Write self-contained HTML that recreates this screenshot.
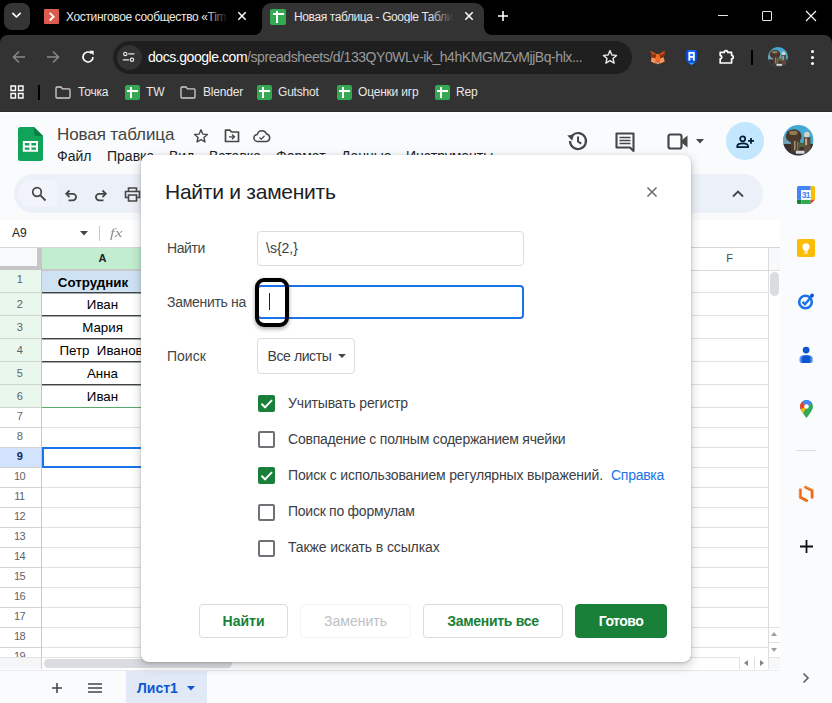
<!DOCTYPE html>
<html lang="ru">
<head>
<meta charset="utf-8">
<title>Новая таблица - Google Таблицы</title>
<style>
*{box-sizing:border-box;margin:0;padding:0}
html,body{width:832px;height:703px;overflow:hidden;background:#fff}
body{position:relative;font-family:"Liberation Sans",sans-serif;color:#202124}
.a{position:absolute}
.t{position:absolute;white-space:nowrap;line-height:1}
svg{position:absolute;overflow:visible}
/* browser chrome */
#tabstrip{left:0;top:0;width:832px;height:36px;background:#000}
#toolbar{left:0;top:35px;width:832px;height:76px;background:#333;border-radius:8px 8px 0 0}
#tabstrip{height:46px}
#sep{left:0;top:111px;width:832px;height:1px;background:#2c2c2c}
.ct{color:#e8e8e8;font-size:12px;letter-spacing:-0.2px}
/* sheets */
#app{left:0;top:112px;width:832px;height:591px;background:#f9fbfd}
.menu{font-size:14px;color:#202124;top:149px}
.rh{position:absolute;left:0;width:39px;text-align:center;font-size:11px;color:#5f6368;line-height:1;letter-spacing:-0.5px}
.cell{position:absolute;left:42px;width:121px;text-align:center;font-size:13.33px;color:#000;line-height:1;white-space:nowrap}
.lbl{font-size:14px;color:#444746}
.cb{position:absolute;left:258.400px;width:17px;height:17px;border-radius:2px}
.cb.off{border:2px solid #6e7276;background:#fff}
.cb.on{background:#188038}
.cbl{font-size:14px;color:#3c4043;left:288px}
.btn{position:absolute;top:604px;height:34px;border-radius:4px;border:1px solid #dadce0;background:#fff;color:#188038;font-size:14px;font-weight:bold;text-align:center;line-height:32px;white-space:nowrap}
</style>
</head>
<body>

<!-- ===== Browser chrome ===== -->
<div class="a" id="tabstrip"></div>
<div class="a" id="toolbar"></div>
<div class="a" id="sep"></div>

<!-- tab search button -->
<div class="a" style="left:4px;top:3px;width:26px;height:26.500px;border-radius:8px;background:#353535"></div>
<svg style="left:11.200px;top:12.300px" width="11" height="7.300" viewBox="0 0 12 8"><path d="M2 1.500 L6 5.500 L10 1.500" fill="none" stroke="#fff" stroke-width="1.800" stroke-linecap="round" stroke-linejoin="round"/></svg>

<!-- tab 1 -->
<div class="a" style="left:44px;top:8.500px;width:15px;height:15.300px;background:#dc5b50;border-radius:1px"></div>
<svg style="left:43.500px;top:8.500px" width="15.300" height="15.300" viewBox="0 0 16 16"><path d="M6 4 L10 8 L6 12" fill="none" stroke="#fff" stroke-width="2"/></svg>
<div class="t ct" style="left:66px;top:11px;width:180px;overflow:hidden;letter-spacing:-0.36px" id="tab1">Хостинговое сообщество «Tim</div>
<div class="a" style="left:206px;top:6px;width:30px;height:22px;background:linear-gradient(90deg,rgba(0,0,0,0),#000 75%)"></div>
<svg style="left:237px;top:11.200px" width="10" height="10" viewBox="0 0 10 10"><path d="M1.300 1.300 L8.700 8.700 M8.700 1.300 L1.300 8.700" stroke="#fff" stroke-width="1.500"/></svg>

<!-- active tab -->
<div class="a" style="left:262px;top:3px;width:222px;height:34px;background:#333;border-radius:9px 9px 0 0"></div>
<svg style="left:254px;top:27px" width="8" height="8" viewBox="0 0 8 8"><path d="M8 0 V8 H0 A8 8 0 0 0 8 0 Z" fill="#333"/></svg>
<svg style="left:484px;top:27px" width="8" height="8" viewBox="0 0 8 8"><path d="M0 0 V8 H8 A8 8 0 0 1 0 0 Z" fill="#333"/></svg>
<div class="a" style="left:270px;top:9px;width:16px;height:16px;background:#34a853;border-radius:2px"></div>
<div class="a" style="left:275.500px;top:11px;width:2px;height:12px;background:#fff"></div>
<div class="a" style="left:272.500px;top:12.700px;width:11px;height:2px;background:#fff"></div>
<div class="t ct" style="left:294px;top:11px;width:166px;overflow:hidden;letter-spacing:-0.39px" id="tab2">Новая таблица - Google Табли</div>
<div class="a" style="left:430px;top:6px;width:28px;height:22px;background:linear-gradient(90deg,rgba(51,51,51,0),#333 85%)"></div>
<svg style="left:463.700px;top:11.200px" width="10" height="10" viewBox="0 0 10 10"><path d="M1.300 1.300 L8.700 8.700 M8.700 1.300 L1.300 8.700" stroke="#fff" stroke-width="1.500"/></svg>
<!-- new tab plus -->
<svg style="left:498.200px;top:11.300px" width="10" height="10" viewBox="0 0 10 10"><path d="M5 0 V10 M0 5 H10" stroke="#fff" stroke-width="1.600"/></svg>
<!-- window controls -->
<div class="a" style="left:718px;top:15px;width:10px;height:1px;background:#e4e4e4"></div>
<div class="a" style="left:762px;top:11px;width:10px;height:10px;border:1px solid #e4e4e4;border-radius:1px"></div>
<svg style="left:806px;top:11px" width="10" height="10" viewBox="0 0 10 10"><path d="M0 0 L10 10 M10 0 L0 10" stroke="#fff" stroke-width="1.1"/></svg>

<!-- nav buttons -->
<svg style="left:12px;top:50px" width="14" height="14" viewBox="0 0 14 14"><path d="M13 7 H2 M7 1.5 L1.5 7 L7 12.5" fill="none" stroke="#8a8a8a" stroke-width="1.5"/></svg>
<svg style="left:46px;top:50px" width="14" height="14" viewBox="0 0 14 14"><path d="M1 7 H12 M7 1.5 L12.5 7 L7 12.5" fill="none" stroke="#8a8a8a" stroke-width="1.5"/></svg>
<svg style="left:81px;top:50px" width="14" height="14" viewBox="0 0 14 14"><path d="M12 7 A5 5 0 1 1 10.5 3.4" fill="none" stroke="#fff" stroke-width="1.6"/><path d="M8.2 0.8 H12.6 V5.2 Z" fill="#fff"/></svg>

<!-- url pill -->
<div class="a" style="left:113px;top:41px;width:519px;height:33px;border-radius:17px;background:#1f1f1f"></div>
<div class="a" style="left:117px;top:45px;width:25px;height:25px;border-radius:13px;background:#333"></div>
<svg style="left:122.300px;top:51px" width="13.300" height="11.700" viewBox="0 0 16 14"><path d="M7.5 3.5 H15 M1 10.5 H8.500" stroke="#e8e8e8" stroke-width="1.500" fill="none"/><circle cx="4" cy="3.500" r="2" fill="none" stroke="#e8e8e8" stroke-width="1.400"/><circle cx="12" cy="10.500" r="2" fill="none" stroke="#e8e8e8" stroke-width="1.400"/></svg>
<div class="t" style="left:148px;top:50px;font-size:14px;color:#fff" id="url"><span style="letter-spacing:-0.45px">docs.google.com</span><span style="color:#9a9a9a;letter-spacing:-0.44px" id="url2">/spreadsheets/d/133QY0WLv-ik_h4hKMGMZvMjjBq-hlx...</span></div>
<svg style="left:602px;top:49px" width="16" height="16" viewBox="0 0 16 16"><path d="M8 1.6 L9.9 6 L14.6 6.4 L11 9.5 L12.1 14.2 L8 11.7 L3.9 14.2 L5 9.5 L1.4 6.4 L6.1 6 Z" fill="none" stroke="#e8e8e8" stroke-width="1.4" stroke-linejoin="round"/></svg>

<!-- extensions -->
<svg style="left:650px;top:49.500px" width="15.500" height="15" viewBox="0 0 16 15"><path d="M0.500 0.500 L6.500 4.200 H9.500 L15.500 0.500 L14.200 7.500 L15 11.500 L10.500 13.800 H5.500 L1 11.500 L1.800 7.500 Z" fill="#f0601f"/><path d="M0.500 0.500 L6.500 4.200 L5.600 8.500 L1.800 7.500 Z M15.500 0.500 L9.500 4.200 L10.400 8.500 L14.200 7.500 Z" fill="#8a2f10"/><path d="M0.500 0.500 L6.500 4.200 L3 4.500 Z M15.500 0.500 L9.500 4.200 L13 4.500 Z" fill="#e2561b"/><path d="M1.800 7.500 L5.600 8.500 L5.500 13.800 L1 11.500 Z M14.200 7.500 L10.400 8.500 L10.500 13.800 L15 11.500 Z" fill="#f7955a"/><path d="M5.600 8.500 L6.500 4.200 H9.500 L10.400 8.500 L8 11 Z" fill="#f26a25"/><path d="M5.800 11.800 H10.200 L8 14.800 Z" fill="#d9cfc6"/><path d="M6.800 12 H9.200 L8 13.200 Z" fill="#3a2a22"/></svg>
<svg style="left:686.300px;top:49.500px" width="11.200" height="15" viewBox="0 0 12 16"><path d="M0 1.500 Q0 0 1.500 0 H10.500 Q12 0 12 1.500 V10 Q12 13 6 16 Q0 13 0 10 Z" fill="#0d47d0"/><path d="M2 0 H10 V11 H2 Z" fill="#1f6bf2"/><path d="M2 12.800 L6 16 L10 12.800 Q6 14.600 2 12.800 Z" fill="#39a8f5"/><path d="M3.600 11.500 V3 H8.400 V11.500 M3.600 7.300 H8.400" stroke="#fff" stroke-width="1.900" fill="none"/></svg>
<svg style="left:718px;top:49px" width="16" height="16" viewBox="0 0 16 16"><path d="M2.200 3.400 H6.300 A1.700 1.700 0 0 1 9.700 3.400 H13.600 V6.400 A1.700 1.700 0 0 1 13.600 9.800 V14 H2.200 V9.800 A1.600 1.600 0 0 0 2.200 6.600 Z" fill="none" stroke="#fff" stroke-width="1.700" stroke-linejoin="round"/></svg>
<div class="a" style="left:751px;top:50px;width:2px;height:15px;background:#000"></div>
<svg style="left:767.5px;top:47px" width="20" height="20" viewBox="0 0 100 100"><clipPath id="cpa"><circle cx="50" cy="50" r="50"/></clipPath><filter id="bla" x="-20%" y="-20%" width="140%" height="140%"><feGaussianBlur stdDeviation="2.500"/></filter><g clip-path="url(#cpa)"><rect width="100" height="100" fill="#45a9d4"/><g filter="url(#bla)"><rect x="-5" y="40" width="40" height="30" fill="#6f9fb8"/><rect x="-5" y="62" width="110" height="45" fill="#3b2f2a"/><ellipse cx="35" cy="36" rx="26" ry="22" fill="#4a392b"/><ellipse cx="34" cy="26" rx="14" ry="7" fill="#8f7a56"/><rect x="26" y="48" width="30" height="42" fill="#4b3c2f"/><rect x="36" y="52" width="5" height="30" fill="#a59475"/><rect x="46" y="55" width="4" height="28" fill="#8d7c60"/><ellipse cx="78" cy="32" rx="9" ry="10" fill="#d9d2c6"/><rect x="68" y="40" width="22" height="52" fill="#5b4a3a"/><rect x="72" y="44" width="7" height="22" fill="#b9a88a"/><rect x="52" y="58" width="18" height="14" fill="#56613f"/><rect x="42" y="84" width="28" height="10" fill="#d6dbe2"/></g></g></svg>
<div class="a" style="left:811px;top:50px;width:3px;height:3px;border-radius:2px;background:#fff;box-shadow:0 6px 0 #fff,0 12px 0 #fff"></div>

<!-- bookmarks bar -->
<svg style="left:10px;top:85px" width="14" height="14" viewBox="0 0 14 14"><path d="M1 1 H5.500 V5.500 H1 Z M8.500 1 H13 V5.500 H8.500 Z M1 8.500 H5.500 V13 H1 Z M8.500 8.500 H13 V13 H8.500 Z" fill="none" stroke="#fff" stroke-width="1.4"/></svg>
<div class="a" style="left:38px;top:85px;width:2px;height:15px;background:#000"></div>
<svg style="left:55px;top:86px" width="16" height="13" viewBox="0 0 16 13"><path d="M1 2 Q1 1 2 1 H6 L7.500 2.800 H14 Q15 2.800 15 3.800 V11 Q15 12 14 12 H2 Q1 12 1 11 Z" fill="none" stroke="#d0d0d0" stroke-width="1.3"/></svg>
<div class="t ct" style="left:78px;top:86px">Точка</div>
<div class="a" style="left:125px;top:85px;width:15px;height:15px;background:#34a853;border-radius:2px"></div>
<div class="a" style="left:129.7px;top:87px;width:2px;height:11px;background:#fff"></div><div class="a" style="left:127px;top:89.500px;width:11px;height:2px;background:#fff"></div>
<div class="t ct" style="left:146px;top:86px">TW</div>
<svg style="left:180px;top:86px" width="16" height="13" viewBox="0 0 16 13"><path d="M1 2 Q1 1 2 1 H6 L7.500 2.800 H14 Q15 2.800 15 3.800 V11 Q15 12 14 12 H2 Q1 12 1 11 Z" fill="none" stroke="#d0d0d0" stroke-width="1.3"/></svg>
<div class="t ct" style="left:203px;top:86px">Blender</div>
<div class="a" style="left:257px;top:85px;width:15px;height:15px;background:#34a853;border-radius:2px"></div>
<div class="a" style="left:261.7px;top:87px;width:2px;height:11px;background:#fff"></div><div class="a" style="left:259px;top:89.500px;width:11px;height:2px;background:#fff"></div>
<div class="t ct" style="left:278px;top:86px">Gutshot</div>
<div class="a" style="left:337px;top:85px;width:15px;height:15px;background:#34a853;border-radius:2px"></div>
<div class="a" style="left:341.7px;top:87px;width:2px;height:11px;background:#fff"></div><div class="a" style="left:339px;top:89.500px;width:11px;height:2px;background:#fff"></div>
<div class="t ct" style="left:358px;top:86px">Оценки игр</div>
<div class="a" style="left:435px;top:85px;width:15px;height:15px;background:#34a853;border-radius:2px"></div>
<div class="a" style="left:439.7px;top:87px;width:2px;height:11px;background:#fff"></div><div class="a" style="left:437px;top:89.500px;width:11px;height:2px;background:#fff"></div>
<div class="t ct" style="left:456px;top:86px">Rep</div>

<!-- ===== Sheets app ===== -->
<div class="a" id="app"></div>
<div class="a" style="left:0;top:112px;width:832px;height:1px;background:#fff"></div>
<!--APP-->
<!-- header -->
<svg style="left:18px;top:127px" width="25" height="34" viewBox="0 0 25 34"><path d="M2.500 0 H16 L25 9 V31.500 Q25 34 22.500 34 H2.500 Q0 34 0 31.500 V2.500 Q0 0 2.500 0 Z" fill="#10a35a"/><path d="M16 0 L25 9 H18.500 Q16 9 16 6.500 Z" fill="#0a8048"/><path d="M4.800 14 H20 V24.800 H4.800 Z M6.800 16 V18.400 H11.400 V16 Z M13.400 16 V18.400 H18 V16 Z M6.800 20.400 V22.800 H11.400 V20.400 Z M13.400 20.400 V22.800 H18 V20.400 Z" fill="#fff" fill-rule="evenodd"/></svg>
<div class="t" id="title" style="left:57px;top:126px;font-size:17px;letter-spacing:-0.1px;color:#444">Новая таблица</div>
<svg style="left:193px;top:128px" width="16" height="16" viewBox="0 0 16 16"><path d="M8 1.800 L9.800 6.100 L14.400 6.500 L10.900 9.500 L12 14 L8 11.600 L4 14 L5.100 9.500 L1.600 6.500 L6.200 6.100 Z" fill="none" stroke="#444746" stroke-width="1.400" stroke-linejoin="round"/></svg>
<svg style="left:224px;top:129px" width="16" height="14" viewBox="0 0 16 14"><path d="M1.500 1.200 H6 L7.500 3 H14.500 V12.500 H1.500 Z" fill="none" stroke="#444746" stroke-width="1.700" stroke-linejoin="round"/><path d="M5 7.800 H10 M8 5.500 L10.500 7.800 L8 10.200" fill="none" stroke="#444746" stroke-width="1.300"/></svg>
<svg style="left:253px;top:129px" width="18" height="14" viewBox="0 0 18 14"><path d="M4.500 12.500 A3.500 3.500 0 0 1 4.300 5.500 A4.800 4.800 0 0 1 13.500 5 A3.800 3.800 0 0 1 13.500 12.500 Z" fill="none" stroke="#444746" stroke-width="1.500"/><path d="M6.500 8.500 L8.300 10.200 L11.500 6.800" fill="none" stroke="#444746" stroke-width="1.300"/></svg>
<div class="t menu" style="left:57px" id="m1">Файл</div>
<div class="t menu" style="left:107px" id="m2">Правка</div>
<div class="t menu" style="left:169px" id="m3">Вид</div>
<div class="t menu" style="left:209px" id="m4">Вставка</div>
<div class="t menu" style="left:276px" id="m5">Формат</div>
<div class="t menu" style="left:341px" id="m6">Данные</div>
<div class="t menu" style="left:406px" id="m7">Инструменты</div>

<!-- header right icons -->
<svg style="left:567px;top:131px" width="21" height="20" viewBox="0 0 21 20"><path d="M3 10 A8 8 0 1 0 5.300 4.400" fill="none" stroke="#444746" stroke-width="2.200"/><path d="M0.300 4.600 L7 3.600 L5.200 9.800 Z" fill="#444746"/><path d="M11 5.500 V10.500 L14.300 12.600" fill="none" stroke="#444746" stroke-width="2"/></svg>
<svg style="left:615px;top:132px" width="20" height="20" viewBox="0 0 20 20"><path d="M1.500 1.500 H18.500 V19 L15 15.500 H1.500 Z" fill="none" stroke="#444746" stroke-width="2.100" stroke-linejoin="round"/><path d="M4.500 5.500 H15.500 M4.500 8.500 H15.500 M4.500 11.500 H15.500" stroke="#444746" stroke-width="1.700"/></svg>
<svg style="left:667px;top:133px" width="22" height="17" viewBox="0 0 22 17"><path d="M1.500 3.500 Q1.500 1.500 3.500 1.500 H12.500 Q14.500 1.500 14.500 3.500 V13.500 Q14.500 15.500 12.500 15.500 H3.500 Q1.500 15.500 1.500 13.500 Z" fill="none" stroke="#444746" stroke-width="2.200"/><path d="M15 7 L20.500 2.500 V14.500 L15 10 Z" fill="#444746"/></svg>
<svg style="left:696px;top:139px" width="8" height="5" viewBox="0 0 8 5"><path d="M0 0 H8 L4 4.500 Z" fill="#444746"/></svg>
<div class="a" style="left:725.500px;top:122px;width:38px;height:38px;border-radius:20px;background:#c2e7ff"></div>
<svg style="left:736px;top:134.800px" width="18.400" height="13.400" viewBox="0 0 22 16"><circle cx="8" cy="4.500" r="3" fill="none" stroke="#001d35" stroke-width="2.100"/><path d="M1.500 14.500 V13.500 Q1.500 10 8 10 Q14.500 10 14.500 13.500 V14.500 Z" fill="none" stroke="#001d35" stroke-width="2.100" stroke-linejoin="round"/><path d="M18 3.500 V10.500 M14.500 7 H21.500" stroke="#001d35" stroke-width="2.100"/></svg>
<svg style="left:783.4px;top:125.4px" width="30.6" height="30.6" viewBox="0 0 100 100"><clipPath id="cpb"><circle cx="50" cy="50" r="50"/></clipPath><filter id="blb" x="-20%" y="-20%" width="140%" height="140%"><feGaussianBlur stdDeviation="2.500"/></filter><g clip-path="url(#cpb)"><rect width="100" height="100" fill="#45a9d4"/><g filter="url(#blb)"><rect x="-5" y="40" width="40" height="30" fill="#6f9fb8"/><rect x="-5" y="62" width="110" height="45" fill="#3b2f2a"/><ellipse cx="35" cy="36" rx="26" ry="22" fill="#4a392b"/><ellipse cx="34" cy="26" rx="14" ry="7" fill="#8f7a56"/><rect x="26" y="48" width="30" height="42" fill="#4b3c2f"/><rect x="36" y="52" width="5" height="30" fill="#a59475"/><rect x="46" y="55" width="4" height="28" fill="#8d7c60"/><ellipse cx="78" cy="32" rx="9" ry="10" fill="#d9d2c6"/><rect x="68" y="40" width="22" height="52" fill="#5b4a3a"/><rect x="72" y="44" width="7" height="22" fill="#b9a88a"/><rect x="52" y="58" width="18" height="14" fill="#56613f"/><rect x="42" y="84" width="28" height="10" fill="#d6dbe2"/></g></g></svg>

<!-- toolbar pill -->
<div class="a" style="left:14px;top:174px;width:749px;height:39px;border-radius:20px;background:#ecf0f8"></div>
<div class="a" style="left:18px;top:180px;width:39px;height:27px;border-radius:14px 4px 4px 14px;background:#f1f4fa"></div>
<svg style="left:31px;top:186px" width="16" height="16" viewBox="0 0 16 16"><circle cx="6" cy="6" r="4.300" fill="none" stroke="#444746" stroke-width="1.700"/><path d="M9.200 9.200 L14.500 14.500" stroke="#444746" stroke-width="1.900"/></svg>
<svg style="left:64px;top:189px" width="14" height="13" viewBox="0 0 14 13"><path d="M2.500 4.800 H8.800 A3.300 3.300 0 0 1 8.800 11.400 H4.500" fill="none" stroke="#444746" stroke-width="1.800"/><path d="M5.500 1.500 L2.200 4.800 L5.500 8.100" fill="none" stroke="#444746" stroke-width="1.800"/></svg>
<svg style="left:94px;top:189px" width="14" height="13" viewBox="0 0 14 13"><path d="M11.500 4.800 H5.200 A3.300 3.300 0 0 0 5.200 11.400 H9.500" fill="none" stroke="#444746" stroke-width="1.800"/><path d="M8.500 1.500 L11.800 4.800 L8.500 8.100" fill="none" stroke="#444746" stroke-width="1.800"/></svg>
<svg style="left:124px;top:187px" width="17" height="15" viewBox="0 0 17 15"><path d="M4.500 4.500 V1 H12.500 V4.500 M4.500 10.500 H1.500 V4.500 H15.500 V10.500 H12.500 M4.500 8 H12.500 V14 H4.500 Z" fill="none" stroke="#444746" stroke-width="1.600"/></svg>
<svg style="left:732px;top:190px" width="12" height="8" viewBox="0 0 12 8"><path d="M1 6.500 L6 1.500 L11 6.500" fill="none" stroke="#444746" stroke-width="1.800"/></svg>

<!-- formula bar -->
<div class="a" style="left:0;top:220px;width:780px;height:27px;background:#fff"></div>
<div class="t" style="left:12px;top:226.500px;font-size:12px;color:#202124" id="namebox">A9</div>
<svg style="left:80px;top:231px" width="8" height="5" viewBox="0 0 8 5"><path d="M0 0 H8 L4 4.500 Z" fill="#444746"/></svg>
<div class="a" style="left:99px;top:226px;width:1px;height:15px;background:#c7c7c7"></div>
<div class="t" style="left:110px;top:226px;font-size:13.500px;font-style:italic;font-family:'Liberation Serif',serif;color:#8a9095;letter-spacing:0.3px;transform:scaleX(1.25);transform-origin:0 0" id="fx">fx</div>
<!-- grid -->
<div class="a" style="left:0;top:247px;width:780px;height:410px;background:#fff"></div>
<div class="a" style="left:0;top:247px;width:780px;height:1px;background:#d5d5d5"></div>
<div class="a" style="left:0;top:248px;width:37px;height:18px;background:#f8f9fa"></div>
<div class="a" style="left:37px;top:248px;width:5px;height:22px;background:#c6c6c6"></div>
<div class="a" style="left:0;top:266px;width:42px;height:4px;background:#c6c6c6"></div>
<div class="a" style="left:42px;top:248px;width:121px;height:22px;background:#c2edcf"></div>
<div class="t" style="left:42px;top:253px;width:121px;text-align:center;font-size:11px;color:#202124;font-weight:bold" id="colA">A</div>
<div class="t" style="left:691px;top:253px;width:77px;text-align:center;font-size:11px;color:#444746" id="colF">F</div>
<div class="a" style="left:42px;top:269px;width:121px;height:2px;background:#c8c8c8"></div>
<div class="a" style="left:163px;top:270px;width:606px;height:1px;background:#d9d9d9"></div>
<div class="a" style="left:769px;top:248px;width:11px;height:22px;background:#f8f9fa"></div>
<div class="a" style="left:769px;top:270px;width:11px;height:1px;background:#dcdcdc"></div>
<div class="a" style="left:0;top:270px;width:41px;height:138px;background:#e9f7ed"></div>
<div class="a" style="left:0;top:448px;width:41px;height:19px;background:#d3e3fd"></div>
<div class="a" style="left:42px;top:271px;width:121px;height:21px;background:#cfe2f3"></div>
<div class="a" style="left:0;top:292px;width:41px;height:1px;background:#d0d4d1"></div>
<div class="a" style="left:42px;top:292px;width:726px;height:1px;background:#e1e1e1"></div>
<div class="a" style="left:0;top:315px;width:41px;height:1px;background:#d0d4d1"></div>
<div class="a" style="left:42px;top:315px;width:726px;height:1px;background:#e1e1e1"></div>
<div class="a" style="left:0;top:338px;width:41px;height:1px;background:#d0d4d1"></div>
<div class="a" style="left:42px;top:338px;width:726px;height:1px;background:#e1e1e1"></div>
<div class="a" style="left:0;top:361px;width:41px;height:1px;background:#d0d4d1"></div>
<div class="a" style="left:42px;top:361px;width:726px;height:1px;background:#e1e1e1"></div>
<div class="a" style="left:0;top:384px;width:41px;height:1px;background:#d0d4d1"></div>
<div class="a" style="left:42px;top:384px;width:726px;height:1px;background:#e1e1e1"></div>
<div class="a" style="left:0;top:407px;width:41px;height:1px;background:#d0d4d1"></div>
<div class="a" style="left:42px;top:407px;width:726px;height:1px;background:#e1e1e1"></div>
<div class="a" style="left:0;top:427px;width:41px;height:1px;background:#d0d4d1"></div>
<div class="a" style="left:42px;top:427px;width:726px;height:1px;background:#e1e1e1"></div>
<div class="a" style="left:0;top:447px;width:41px;height:1px;background:#d0d4d1"></div>
<div class="a" style="left:42px;top:447px;width:726px;height:1px;background:#e1e1e1"></div>
<div class="a" style="left:0;top:467px;width:41px;height:1px;background:#d0d4d1"></div>
<div class="a" style="left:42px;top:467px;width:726px;height:1px;background:#e1e1e1"></div>
<div class="a" style="left:0;top:487px;width:41px;height:1px;background:#d0d4d1"></div>
<div class="a" style="left:42px;top:487px;width:726px;height:1px;background:#e1e1e1"></div>
<div class="a" style="left:0;top:507px;width:41px;height:1px;background:#d0d4d1"></div>
<div class="a" style="left:42px;top:507px;width:726px;height:1px;background:#e1e1e1"></div>
<div class="a" style="left:0;top:527px;width:41px;height:1px;background:#d0d4d1"></div>
<div class="a" style="left:42px;top:527px;width:726px;height:1px;background:#e1e1e1"></div>
<div class="a" style="left:0;top:547px;width:41px;height:1px;background:#d0d4d1"></div>
<div class="a" style="left:42px;top:547px;width:726px;height:1px;background:#e1e1e1"></div>
<div class="a" style="left:0;top:567px;width:41px;height:1px;background:#d0d4d1"></div>
<div class="a" style="left:42px;top:567px;width:726px;height:1px;background:#e1e1e1"></div>
<div class="a" style="left:0;top:587px;width:41px;height:1px;background:#d0d4d1"></div>
<div class="a" style="left:42px;top:587px;width:726px;height:1px;background:#e1e1e1"></div>
<div class="a" style="left:0;top:607px;width:41px;height:1px;background:#d0d4d1"></div>
<div class="a" style="left:42px;top:607px;width:726px;height:1px;background:#e1e1e1"></div>
<div class="a" style="left:0;top:627px;width:41px;height:1px;background:#d0d4d1"></div>
<div class="a" style="left:42px;top:627px;width:726px;height:1px;background:#e1e1e1"></div>
<div class="a" style="left:0;top:647px;width:41px;height:1px;background:#d0d4d1"></div>
<div class="a" style="left:42px;top:647px;width:726px;height:1px;background:#e1e1e1"></div>
<div class="a" style="left:41px;top:270px;width:1px;height:387px;background:#c6c6c6"></div>
<div class="a" style="left:768px;top:248px;width:1px;height:409px;background:#dcdcdc"></div>
<div class="a" style="left:42px;top:292px;width:121px;height:1px;background:#3d444a"></div>
<div class="a" style="left:42px;top:293px;width:121px;height:1px;background:#a8a8a8"></div>
<div class="a" style="left:42px;top:315px;width:121px;height:1px;background:#3d444a"></div>
<div class="a" style="left:42px;top:316px;width:121px;height:1px;background:#a8a8a8"></div>
<div class="a" style="left:42px;top:338px;width:121px;height:1px;background:#3d444a"></div>
<div class="a" style="left:42px;top:339px;width:121px;height:1px;background:#a8a8a8"></div>
<div class="a" style="left:42px;top:361px;width:121px;height:1px;background:#3d444a"></div>
<div class="a" style="left:42px;top:362px;width:121px;height:1px;background:#a8a8a8"></div>
<div class="a" style="left:42px;top:384px;width:121px;height:1px;background:#3d444a"></div>
<div class="a" style="left:42px;top:385px;width:121px;height:1px;background:#a8a8a8"></div>
<div class="a" style="left:42px;top:407px;width:121px;height:1px;background:#57a86b"></div>
<div class="rh" style="top:274px">1</div>
<div class="rh" style="top:299px">2</div>
<div class="rh" style="top:322px">3</div>
<div class="rh" style="top:345px">4</div>
<div class="rh" style="top:368px">5</div>
<div class="rh" style="top:391px">6</div>
<div class="rh" style="top:411px">7</div>
<div class="rh" style="top:431px">8</div>
<div class="rh" style="top:451px;font-weight:bold;color:#0b2a66">9</div>
<div class="rh" style="top:471px">10</div>
<div class="rh" style="top:491px">11</div>
<div class="rh" style="top:511px">12</div>
<div class="rh" style="top:531px">13</div>
<div class="rh" style="top:551px">14</div>
<div class="rh" style="top:571px">15</div>
<div class="rh" style="top:591px">16</div>
<div class="rh" style="top:611px">17</div>
<div class="rh" style="top:631px">18</div>
<div class="rh" style="top:651px">19</div>
<div class="cell" style="top:276px;font-weight:bold;margin-left:-9.5px">Сотрудник</div>
<div class="cell" style="top:298px">Иван</div>
<div class="cell" style="top:321px">Мария</div>
<div class="cell" style="top:344px;margin-left:-1.5px">Петр&nbsp; Иванов</div>
<div class="cell" style="top:367px">Анна</div>
<div class="cell" style="top:390px">Иван</div>
<div class="a" style="left:42px;top:447px;width:122px;height:21px;border:2px solid #1a73e8"></div>
<div class="a" style="left:0;top:657px;width:780px;height:13px;background:#fff"></div>
<div class="a" style="left:0;top:657px;width:780px;height:1px;background:#e4e4e4"></div>
<div class="a" style="left:769px;top:658px;width:11px;height:11px;background:#f6f7f8"></div>
<div class="a" style="left:0;top:658px;width:41px;height:11px;background:#f5f6f7"></div>
<div class="a" style="left:41px;top:657px;width:1px;height:12px;background:#d0d0d0"></div>
<div class="a" style="left:44px;top:659px;width:188px;height:9px;border-radius:5px;background:#dadce0"></div>
<div class="a" style="left:769px;top:271px;width:11px;height:386px;background:#fff"></div>
<div class="a" style="left:770px;top:272px;width:9px;height:24px;border-radius:5px;background:#dadce0"></div>
<!-- scroll arrows -->
<div class="a" style="left:769px;top:627px;width:11px;height:30px;background:#fff;border-top:1px solid #e1e1e1"></div>
<div class="a" style="left:769px;top:642px;width:11px;height:1px;background:#e1e1e1"></div>
<svg style="left:771px;top:632px" width="6" height="4" viewBox="0 0 6 4"><path d="M0 4 H6 L3 0 Z" fill="#9aa0a6"/></svg>
<svg style="left:771px;top:648px" width="6" height="4" viewBox="0 0 6 4"><path d="M0 0 H6 L3 4 Z" fill="#9aa0a6"/></svg>
<div class="a" style="left:739px;top:657px;width:30px;height:12px;background:#fff;border-left:1px solid #e1e1e1;border-right:1px solid #e1e1e1"></div>
<div class="a" style="left:754px;top:657px;width:1px;height:12px;background:#e1e1e1"></div>
<svg style="left:744px;top:660px" width="4" height="6" viewBox="0 0 4 6"><path d="M4 0 V6 L0 3 Z" fill="#80868b"/></svg>
<svg style="left:760px;top:660px" width="4" height="6" viewBox="0 0 4 6"><path d="M0 0 V6 L4 3 Z" fill="#80868b"/></svg>
<div class="a" style="left:0;top:670px;width:780px;height:1px;background:#e7e9ec"></div>

<!-- bottom sheet bar -->
<svg style="left:51px;top:682px" width="12" height="12" viewBox="0 0 12 12"><path d="M6 1 V11 M1 6 H11" stroke="#444746" stroke-width="1.600"/></svg>
<svg style="left:88px;top:683px" width="14" height="10" viewBox="0 0 14 10"><path d="M0 1 H14 M0 5 H14 M0 9 H14" stroke="#444746" stroke-width="1.500"/></svg>
<div class="a" style="left:126px;top:671px;width:81px;height:32px;background:#e1e9f7"></div>
<div class="t" style="left:137px;top:681px;font-size:14px;font-weight:bold;color:#0b57d0" id="sheet1">Лист1</div>
<svg style="left:187px;top:686px" width="8" height="5" viewBox="0 0 8 5"><path d="M0 0 H8 L4 4.500 Z" fill="#0b57d0"/></svg>

<!-- side panel -->
<div class="a" style="left:780px;top:166px;width:52px;height:537px;background:#f9fbfd"></div>
<!-- calendar -->
<svg style="left:797px;top:186px" width="18" height="18" viewBox="0 0 18 18"><path d="M0 1.500 Q0 0 1.500 0 H13.700 V4.300 H4.300 V13.700 H0 Z" fill="#4285f4"/><path d="M13.700 0 H16.500 Q18 0 18 1.500 V13.700 H13.700 Z" fill="#fbbc04"/><path d="M13.700 0 H16.500 Q18 0 18 1.500 V4.300 H13.700 Z" fill="#1967d2" opacity="0"/><path d="M0 13.700 H4.300 V18 H1.500 Q0 18 0 16.500 Z" fill="#188038"/><path d="M4.300 13.700 H13.700 V18 H4.300 Z" fill="#34a853"/><path d="M13.700 13.700 H18 L13.700 18 Z" fill="#ea4335"/><rect x="4.300" y="4.300" width="9.400" height="9.400" fill="#fff"/><text x="8.700" y="12.200" font-size="8.500" font-family="Liberation Sans, sans-serif" font-weight="bold" fill="#4285f4" text-anchor="middle" letter-spacing="-0.700">31</text></svg>
<!-- keep -->
<div class="a" style="left:797px;top:239px;width:18px;height:18px;border-radius:2px;background:#fbbc04"></div>
<svg style="left:802px;top:243px" width="8" height="11" viewBox="0 0 8 11"><circle cx="4" cy="3.800" r="3.600" fill="#fff"/><rect x="2.300" y="6.500" width="3.400" height="2" fill="#fff"/><rect x="2.300" y="9.300" width="3.400" height="1.300" fill="#fff"/></svg>
<!-- tasks -->
<svg style="left:797px;top:292px" width="18" height="18" viewBox="0 0 18 18"><circle cx="8.500" cy="10" r="6.300" fill="none" stroke="#1a73e8" stroke-width="2.600"/><path d="M5.500 9.800 L8 12.300 L14.500 4.500" fill="none" stroke="#1a73e8" stroke-width="2.400"/><circle cx="15" cy="3.500" r="2" fill="#1558d6"/></svg>
<!-- contacts -->
<svg style="left:799px;top:346px" width="14" height="17" viewBox="0 0 14 17"><circle cx="7.100" cy="4.100" r="3.400" fill="#0b57d0"/><path d="M0.500 13 Q0.500 9.200 4.500 9.200 H9.700 Q13.700 9.200 13.700 13 V15 Q13.700 17 11.700 17 H2.500 Q0.500 17 0.500 15 Z" fill="#5a8ff0"/><path d="M2.800 17 V12.500 Q2.800 9.200 7.100 9.200 Q11.400 9.200 11.400 12.500 V17 Z" fill="#0b57d0"/></svg>
<!-- maps -->
<svg style="left:799.700px;top:399.500px" width="13" height="18" viewBox="0 0 13 18"><path d="M6.500 0 A6.500 6.500 0 0 1 13 6.500 Q13 10 6.500 18 Q0 10 0 6.500 A6.500 6.500 0 0 1 6.500 0 Z" fill="#34a853"/><path d="M6.500 0 A6.500 6.500 0 0 1 12.300 3.500 L6.500 6.500 L2 1.800 A6.500 6.500 0 0 1 6.500 0 Z" fill="#4285f4"/><path d="M2 1.800 L6.500 6.500 L0.600 9.300 Q0 8 0 6.500 A6.500 6.500 0 0 1 2 1.800 Z" fill="#ea4335"/><path d="M0.600 9.300 L6.500 6.500 L3.300 13.300 Q1.300 10.800 0.600 9.300 Z" fill="#fbbc04"/><circle cx="6.500" cy="6.500" r="2.300" fill="#fff"/></svg>
<div class="a" style="left:796px;top:450px;width:20px;height:1px;background:#dadce0"></div>
<!-- orange addon -->
<svg style="left:798px;top:485px" width="16" height="18" viewBox="0 0 16 18"><path d="M7.600 2.200 L14.100 5.500 V12.400" fill="none" stroke="#f06a16" stroke-width="2.800" stroke-linejoin="round" stroke-linecap="round"/><path d="M2.300 5 V12.300 L8.600 15.600" fill="none" stroke="#f06a16" stroke-width="2.800" stroke-linejoin="round" stroke-linecap="round"/><path d="M7.600 1.300 L14.600 4.800" fill="none" stroke="#f9a55f" stroke-width="0.800"/><path d="M1.300 5 V12.300" fill="none" stroke="#f9a55f" stroke-width="0.800"/></svg>
<svg style="left:799.500px;top:540px" width="13" height="13" viewBox="0 0 13 13"><path d="M6.500 0 V13 M0 6.500 H13" stroke="#111" stroke-width="1.800"/></svg>
<svg style="left:802px;top:672px" width="8" height="12" viewBox="0 0 8 12"><path d="M1.500 1.500 L6 6 L1.500 10.500" fill="none" stroke="#5f6368" stroke-width="1.700"/></svg>
<!-- ===== Find & replace dialog ===== -->
<div class="a" id="dlg" style="left:141px;top:155px;width:550px;height:507px;border-radius:8px;background:#fff;box-shadow:0 1px 3px rgba(60,64,67,.3),0 4px 8px 3px rgba(60,64,67,.15)"></div>
<div class="t" id="dtitle" style="letter-spacing:-0.25px;left:165px;top:181px;font-size:21px;color:#202124">Найти и заменить</div>
<svg style="left:647px;top:187px" width="10" height="10" viewBox="0 0 10 10"><path d="M0.500 0.500 L9.500 9.500 M9.500 0.500 L0.500 9.500" stroke="#6b6b6b" stroke-width="1.500"/></svg>

<div class="t lbl" id="l1" style="letter-spacing:-0.4px;left:167px;top:241px">Найти</div>
<div class="a" style="left:257px;top:231px;width:267px;height:35px;border:1px solid #dadce0;border-radius:4px;background:#fff"></div>
<div class="t" id="in1" style="left:266px;top:241px;font-size:14px;color:#3c4043">\s{2,}</div>

<div class="t lbl" id="l2" style="letter-spacing:-0.3px;left:167px;top:295px">Заменить на</div>
<div class="a" style="left:257px;top:285px;width:267px;height:34px;border:2px solid #1a73e8;border-radius:4px;background:#fff"></div>
<div class="a" style="left:269px;top:293px;width:1px;height:17px;background:#202124"></div>
<div class="a" style="left:255px;top:278px;width:34px;height:49px;border:4px solid #000;border-radius:9px;box-shadow:0 2px 4px rgba(0,0,0,.35)"></div>

<div class="t lbl" id="l3" style="left:167px;top:349px">Поиск</div>
<div class="a" style="left:257px;top:338px;width:98px;height:36px;border:1px solid #dadce0;border-radius:4px;background:#fff"></div>
<div class="t" id="dd" style="letter-spacing:-0.4px;left:267.500px;top:349px;font-size:14px;color:#3c4043">Все листы</div>
<svg style="left:338px;top:354px" width="8" height="4" viewBox="0 0 8 4"><path d="M0 0 H8 L4 4 Z" fill="#444746"/></svg>

<div class="cb on" style="top:394.500px"></div>
<svg style="left:260px;top:397.500px" width="13.500" height="11.500" viewBox="0 0 14 12"><path d="M1.500 6 L5.200 9.700 L12.500 2.200" fill="none" stroke="#fff" stroke-width="2"/></svg>
<div class="t cbl" id="c1" style="letter-spacing:-0.15px;top:396px">Учитывать регистр</div>
<div class="cb off" style="top:430.600px"></div>
<div class="t cbl" id="c2" style="letter-spacing:-0.23px;top:432px">Совпадение с полным содержанием ячейки</div>
<div class="cb on" style="top:467px"></div>
<svg style="left:260px;top:470px" width="13.500" height="11.500" viewBox="0 0 14 12"><path d="M1.500 6 L5.200 9.700 L12.500 2.200" fill="none" stroke="#fff" stroke-width="2"/></svg>
<div class="t cbl" id="c3" style="letter-spacing:-0.16px;top:468px">Поиск с использованием регулярных выражений.</div>
<div class="t" id="help" style="letter-spacing:-0.27px;left:611px;top:468px;font-size:14px;color:#1a73e8">Справка</div>
<div class="cb off" style="top:503.600px"></div>
<div class="t cbl" id="c4" style="letter-spacing:-0.26px;top:504px">Поиск по формулам</div>
<div class="cb off" style="top:540px"></div>
<div class="t cbl" id="c5" style="letter-spacing:-0.11px;top:540px">Также искать в ссылках</div>

<div class="btn" id="b1" style="left:199px;width:89px">Найти</div>
<div class="btn" id="b2" style="left:300px;width:111px;color:#bdc1c6;border-color:#f1f3f4;font-weight:normal">Заменить</div>
<div class="btn" id="b3" style="letter-spacing:-0.3px;left:423px;width:140px">Заменить все</div>
<div class="btn" id="b4" style="letter-spacing:-0.5px;left:575px;width:92px;background:#188038;border-color:#188038;color:#fff">Готово</div>
<!--/APP-->

</body>
</html>
